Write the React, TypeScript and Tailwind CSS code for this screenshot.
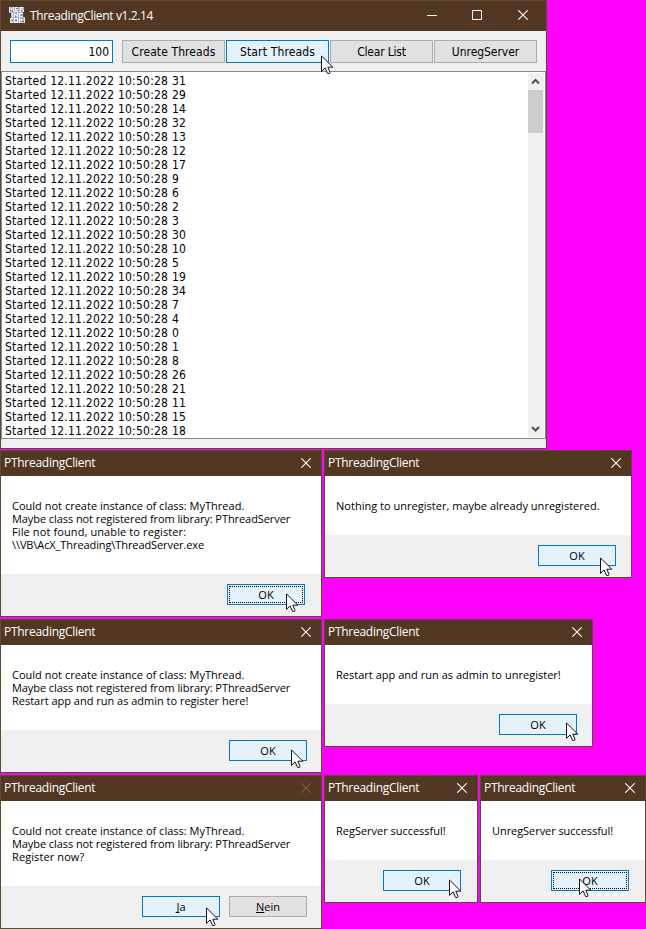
import type { ReactNode } from "react";

const threadIds = [31, 29, 14, 32, 13, 12, 17, 9, 6, 2, 3, 30, 10, 5, 19, 34, 7, 4, 0, 1, 8, 26, 21, 11, 15, 18];

function Cursor({ at }: { at: string }) {
  return (
    <svg className={`pointer-events-none absolute z-10 ${at}`} width="13" height="20" viewBox="0 0 13 20">
      <path d="M.5.9V16.4L4.1 12.9L6.5 18.4H8.6L9 17.4L6.8 12.2H11.8Z" fill="#fff" stroke="#10102a" strokeWidth="1" />
    </svg>
  );
}

function CloseIcon({ dim = false }: { dim?: boolean }) {
  return (
    <svg width="10" height="10" viewBox="0 0 10 10" className={dim ? "text-[#78624f]" : "text-white"}>
      <path d="M.3.3L9.7 9.7M9.7.3L.3 9.7" stroke="currentColor" strokeWidth="1.1" fill="none" />
    </svg>
  );
}

function AppIcon() {
  return (
    <svg width="16" height="16" viewBox="0 0 16 16" shapeRendering="crispEdges">
      <path d="M0 0H15V5H14V10H16V16H1V11H2V6H0Z" fill="#b3b5cf" />
      <path
        d="M.5 0V5M2.5 1V3M4.5 0V5M6.5 0V5M7 .5H9M7 2.5H9M7 4.5H9M11.5 0V5M12 .5H14M12 2.5H14M14.5 3V5M3.5 6V10M5.5 6V10M6 7.5H7M7 8.5H8M8.5 6V10M10.5 6V10M11 6.5H14M11 9.5H14M1.5 11V16M2 11.5H4M2 15.5H4M5.5 11V16M6 11.5H8M6 15.5H8M8.5 11V16M10.5 11V16M11 12.5H12M12.5 12V14M15.5 11V16"
        stroke="#f4f4fa"
        strokeWidth="1"
        fill="none"
      />
      <path d="M1 3.5H2M3 4.5H4M7 1.5H9M12 3.5H13M6 9.5H7M12 8.5H13M3 13.5H4M6 13.5H8M13 14.5H15" stroke="#686d9c" strokeWidth="1" />
    </svg>
  );
}

function ToolButton({ children, hot = false, text, cursor }: { children: ReactNode; hot?: boolean; text: string; cursor?: string }) {
  return (
    <button
      className={`relative flex h-[23px] w-[103px] items-center justify-center border font-['DejaVu_Sans_Condensed','DejaVu_Sans',sans-serif] text-[12px] font-[stretch:condensed] leading-none whitespace-nowrap text-black ${
        hot ? "border-[#0078d7] bg-[#e5f1fb]" : "border-[#adadad] bg-[#e1e1e1]"
      }`}
    >
      <span className={text}>{children}</span>
      {cursor && <Cursor at={cursor} />}
    </button>
  );
}

function DialogButton({ children, hot = true, focus = false, cursor }: { children: ReactNode; hot?: boolean; focus?: boolean; cursor?: string }) {
  return (
    <button
      className={`relative h-[21px] w-[78px] border p-px text-[11px] leading-none text-black ${
        hot ? "border-[#0078d7] bg-[#e5f1fb]" : "border-[#adadad] bg-[#e1e1e1]"
      }`}
    >
      <span className={`flex h-full w-full items-center justify-center border border-dotted ${focus ? "border-black" : "border-transparent"}`}>
        <span className="[text-decoration-skip-ink:none]">{children}</span>
      </span>
      {cursor && <Cursor at={cursor} />}
    </button>
  );
}

type DialogProps = {
  size: string;
  pad?: string;
  lines: { text: string; track: string }[];
  dimClose?: boolean;
  children: ReactNode;
};

function Dialog({ size, pad = "pr-[15px]", lines, dimClose, children }: DialogProps) {
  return (
    <section className={`flex shrink-0 flex-col border border-[#5c4a33] bg-[#f0f0f0] ${size}`}>
      <header className="flex h-[25px] shrink-0 items-center justify-between bg-[#523723] pr-[10px] pb-px pl-[3px] text-[12px] leading-none text-white">
        <span className="tracking-[-0.28px]">PThreadingClient</span>
        <CloseIcon dim={dimClose} />
      </header>
      <div className="flex-1 bg-white pt-[23px] pl-[11px] text-[11px] leading-[13px] whitespace-nowrap text-black">
        {lines.map((l) => (
          <p key={l.text} className={l.track}>{l.text}</p>
        ))}
      </div>
      <footer className={`flex h-[42px] shrink-0 justify-end gap-[9px] pt-[10px] ${pad}`}>{children}</footer>
    </section>
  );
}

const noInstance = [
  { text: "Could not create instance of class: MyThread.", track: "tracking-[0.01px]" },
  { text: "Maybe class not registered from library: PThreadServer", track: "tracking-[-0.075px]" },
];

export default function App() {
  return (
    <main className="flex h-[929px] w-[646px] flex-col overflow-hidden bg-[#ff00ff] font-['Open_Sans',sans-serif]">
      <section className="flex h-[449px] w-[547px] shrink-0 flex-col border border-[#5c4a33] bg-[#f0f0f0]">
        <header className="flex h-[30px] shrink-0 items-center bg-[#523723] pr-[18px] pb-[2px] pl-[8px] text-[12px] leading-none text-white">
          <AppIcon />
          <span className="mt-px ml-[5px] flex-1 tracking-[-0.36px]">ThreadingClient v1.2.14</span>
          <div className="flex items-center">
            <svg width="10" height="10" viewBox="0 0 10 10"><path d="M0 5.5H10" stroke="#fff" /></svg>
            <svg width="10" height="10" viewBox="0 0 10 10" className="mr-[36px] ml-[35px]"><path d="M.5.5H9.5V9.5H.5Z" stroke="#fff" fill="none" /></svg>
            <CloseIcon />
          </div>
        </header>
        <div className="flex h-[40px] shrink-0 items-start gap-px pt-[9px] pl-[9px]">
          <div className="mr-[8px] flex h-[23px] w-[103px] items-center justify-end border border-[#0078d7] bg-white pr-[3px] font-['DejaVu_Sans_Condensed','DejaVu_Sans',sans-serif] text-[12px] font-[stretch:condensed] leading-none text-black">
            100
          </div>
          <ToolButton text="tracking-[0.1px]">Create Threads</ToolButton>
          <ToolButton text="tracking-[0.15px]" hot cursor="left-[94px] top-[14px]">Start Threads</ToolButton>
          <ToolButton text="tracking-[-0.2px]">Clear List</ToolButton>
          <ToolButton text="tracking-[-0.05px]">UnregServer</ToolButton>
        </div>
        <div className="flex h-[368px] shrink-0 justify-between border border-[#828790] bg-white py-px pr-px pl-[3px]">
          <ul className="pt-px font-['DejaVu_Sans_Condensed','DejaVu_Sans',sans-serif] text-[12px] font-[stretch:condensed] leading-[14px] tracking-[0.23px] whitespace-nowrap text-black">
            {threadIds.map((id) => (
              <li key={id}>Started 12.11.2022 10:50:28 {id}</li>
            ))}
          </ul>
          <div className="flex w-[16px] flex-col items-start bg-[#f0f0f0]">
            <svg width="15" height="17" viewBox="0 0 15 17" className="shrink-0"><path d="M4 10.5L7.5 7L11 10.5" stroke="#505050" strokeWidth="2" fill="none" /></svg>
            <div className="h-[43px] w-[15px] bg-[#cdcdcd]" />
            <svg width="15" height="17" viewBox="0 0 15 17" className="mt-auto shrink-0"><path d="M4 7L7.5 10.5L11 7" stroke="#505050" strokeWidth="2" fill="none" /></svg>
          </div>
        </div>
      </section>

      <div className="mt-px flex items-start gap-[2px]">
        <Dialog
          size="h-[167px] w-[322px]"
          pad="pr-[16px]"
          lines={[
            ...noInstance,
            { text: "File not found, unable to register:", track: "tracking-[0.11px]" },
            { text: "\\\\VB\\AcX_Threading\\ThreadServer.exe", track: "tracking-[-0.09px]" },
          ]}
        >
          <DialogButton focus cursor="left-[58px] top-[8px]">OK</DialogButton>
        </Dialog>
        <Dialog size="h-[128px] w-[308px]" lines={[{ text: "Nothing to unregister, maybe already unregistered.", track: "tracking-[0.02px]" }]}>
          <DialogButton cursor="left-[61px] top-[11px]">OK</DialogButton>
        </Dialog>
      </div>

      <div className="mt-[2px] flex items-start gap-[2px]">
        <Dialog
          size="h-[154px] w-[322px]"
          pad="pr-[14px]"
          lines={[...noInstance, { text: "Restart app and run as admin to register here!", track: "tracking-[-0.01px]" }]}
        >
          <DialogButton cursor="left-[61px] top-[8px]">OK</DialogButton>
        </Dialog>
        <Dialog size="h-[128px] w-[269px]" lines={[{ text: "Restart app and run as admin to unregister!", track: "tracking-[0.02px]" }]}>
          <DialogButton cursor="left-[66px] top-[7px]">OK</DialogButton>
        </Dialog>
      </div>

      <div className="mt-[2px] flex items-start gap-[2px]">
        <Dialog size="h-[154px] w-[322px]" pad="pr-[14px]" dimClose lines={[...noInstance, { text: "Register now?", track: "tracking-[0.1px]" }]}>
          <DialogButton cursor="left-[63px] top-[10px]"><u>J</u>a</DialogButton>
          <DialogButton hot={false}><u>N</u>ein</DialogButton>
        </Dialog>
        <Dialog size="h-[128px] w-[154px]" pad="pr-[16px]" lines={[{ text: "RegServer successful!", track: "tracking-[-0.02px]" }]}>
          <DialogButton cursor="left-[65px] top-[8px]">OK</DialogButton>
        </Dialog>
        <Dialog size="h-[128px] w-[166px]" pad="pr-[16px]" lines={[{ text: "UnregServer successful!", track: "tracking-[-0.06px]" }]}>
          <DialogButton focus cursor="left-[27px] top-[7px]">OK</DialogButton>
        </Dialog>
      </div>
    </main>
  );
}
